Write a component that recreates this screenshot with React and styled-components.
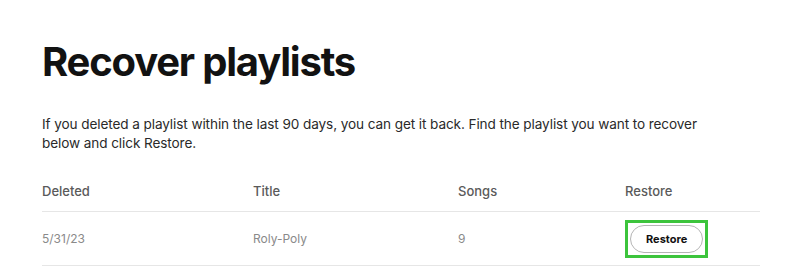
import styled, { createGlobalStyle } from "styled-components";

const GlobalStyle = createGlobalStyle`
    body {
        margin: 0;
        background: #ffffff;
        font-family: "Inter", "Liberation Sans", sans-serif;
    }
`;

const Page = styled.div`
    width: 800px;
    height: 271px;
    box-sizing: border-box;
    padding: 34px 40px 0 42px;
    overflow: hidden;
`;

const Title = styled.h1`
    margin: 0;
    font-size: 40px;
    font-weight: 700;
    letter-spacing: -1.2px;
    color: #121212;
    line-height: 56px;
`;

const Intro = styled.p`
    margin: 25px 0 0;
    width: 692px;
    font-size: 13.6px;
    line-height: 19px;
    color: #2a2a2a;
    letter-spacing: -0.1px;
`;

const Table = styled.div`
    margin-top: 17px;
    width: 718px;
`;

const Row = styled.div`
    display: grid;
    grid-template-columns: 211px 205px 167px 1fr;
    align-items: center;
    height: ${p => p.$h}px;
    border-bottom: 1px solid #e6e6e6;
`;

const Cell = styled.div`
    font-size: ${p => (p.$head ? 13 : 12)}px;
    color: ${p => (p.$head ? "#5a5a5a" : "#8a8a8a")};
    font-weight: ${p => (p.$head ? 500 : 400)};
`;

const Highlight = styled.div`
    display: inline-flex;
    padding: 2px;
    border: 3px solid #3cc43c;
`;

const RestoreButton = styled.button`
    font-family: inherit;
    font-size: 11px;
    font-weight: 700;
    color: #111;
    background: #fff;
    border: 1px solid #b5b5b5;
    border-radius: 14px;
    padding: 6px 15px;
    cursor: pointer;
`;

export default function App() {
    return (
        <>
            <GlobalStyle />
            <Page>
                <Title>Recover playlists</Title>
                <Intro>
                    If you deleted a playlist within the last 90 days, you can get it back. Find the playlist you want to recover below and click Restore.
                </Intro>
                <Table>
                    <Row $h={41}>
                        <Cell $head>Deleted</Cell>
                        <Cell $head>Title</Cell>
                        <Cell $head>Songs</Cell>
                        <Cell $head>Restore</Cell>
                    </Row>
                    <Row $h={53}>
                        <Cell>5/31/23</Cell>
                        <Cell>Roly-Poly</Cell>
                        <Cell>9</Cell>
                        <Cell>
                            <Highlight>
                                <RestoreButton>Restore</RestoreButton>
                            </Highlight>
                        </Cell>
                    </Row>
                </Table>
            </Page>
        </>
    );
}
